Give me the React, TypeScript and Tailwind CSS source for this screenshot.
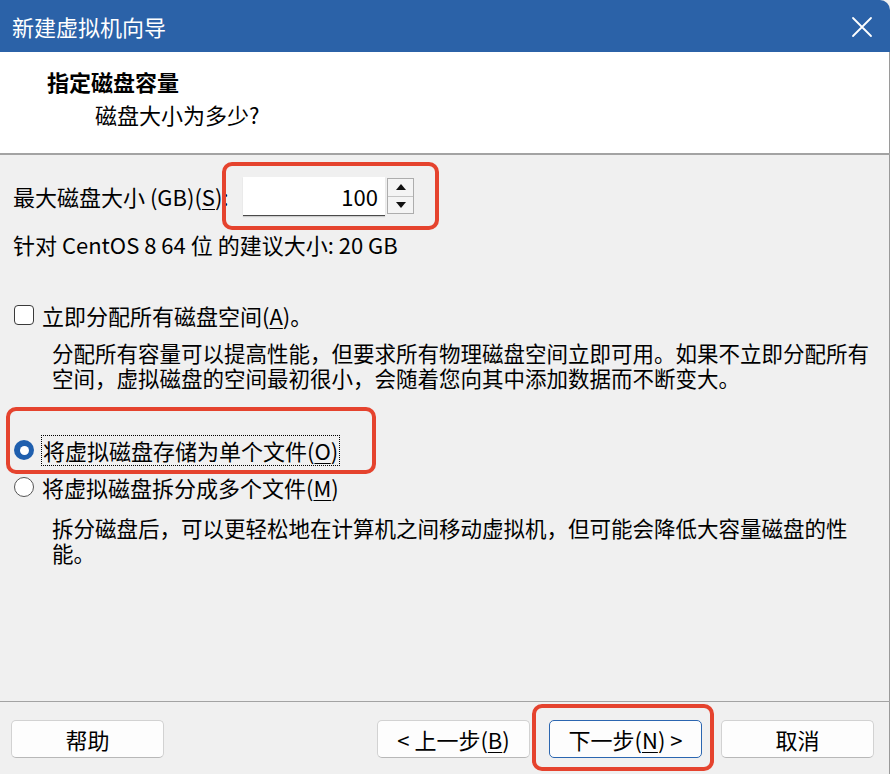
import React from "react";

function U({ children }: { children: React.ReactNode }) {
  return <span className="underline decoration-1 underline-offset-[3px]">{children}</span>;
}

function Btn({ children, primary }: { children: React.ReactNode; primary?: boolean }) {
  return (
    <div
      className={
        "h-[38px] w-[153px] flex items-center justify-center rounded-[5px] bg-[#fdfdfd] leading-none " +
        (primary
          ? "border-[1.5px] border-[#2b66b0]"
          : "border border-[#d2d2d2] border-b-[#b8b8b8]")
      }
    >
      {children}
    </div>
  );
}

export default function App() {
  return (
    <div className="relative w-[890px] h-[774px] flex flex-col bg-[#f0f0f0] overflow-hidden text-[22px] text-black font-['Noto_Sans_CJK_SC',sans-serif]">
      {/* title bar */}
      <div className="h-[52px] shrink-0 bg-[#2b62a8] flex items-center justify-between pl-[12px] pr-[17px] text-white rounded-tr-[10px]">
        <span className="leading-none">新建虚拟机向导</span>
        <svg width="22" height="22" viewBox="0 0 22 22" className="mt-[1px]">
          <path d="M2 2 L20 20 M20 2 L2 20" stroke="#ffffff" strokeWidth="1.8" strokeLinecap="round" />
        </svg>
      </div>

      {/* header */}
      <div className="h-[101px] shrink-0 bg-white pl-[47px] pt-[15px] border-r border-[#9a9a9a]">
        <div className="font-bold leading-[28px]">指定磁盘容量</div>
        <div className="pl-[48px] mt-[5px] leading-[28px]">磁盘大小为多少?</div>
      </div>
      <div className="h-[2px] shrink-0 bg-[#a3a3a3]" />

      {/* body */}
      <div className="flex-1 flex flex-col pl-[13px] pr-[4px] pt-[21px] border-r border-[#9a9a9a]">
        <div className="flex items-center h-[40px]">
          <div className="w-[230px] leading-none">
            最大磁盘大小 (GB)(<U>S</U>):
          </div>
          <div className="h-[39px] w-[142px] bg-white border-b-[1.5px] border-[#4a4a4a] shadow-[0_1px_1px_rgba(0,0,0,0.15)] flex items-center justify-end pr-[7px] leading-none">
            100
          </div>
          <div className="ml-[2px] h-[36px] w-[27px] border border-[#adadad] bg-[#f4f4f4] flex flex-col">
            <div className="flex-1 flex items-center justify-center border-b border-[#c4c4c4]">
              <svg width="10" height="6" viewBox="0 0 10 6"><path d="M0 6 L5 0 L10 6 Z" fill="#111" /></svg>
            </div>
            <div className="flex-1 flex items-center justify-center">
              <svg width="10" height="6" viewBox="0 0 10 6"><path d="M0 0 L5 6 L10 0 Z" fill="#111" /></svg>
            </div>
          </div>
        </div>

        <div className="mt-[15px] leading-[26px]">针对 CentOS 8 64 位 的建议大小: 20 GB</div>

        <div className="mt-[43px] flex items-center h-[30px]">
          <div className="w-[20px] h-[20px] ml-[1px] rounded-[4px] border-[1.5px] border-[#3a3a3a] bg-white" />
          <div className="ml-[8px] leading-none">
            立即分配所有磁盘空间(<U>A</U>)。
          </div>
        </div>

        <div className="mt-[10px] pl-[39px] text-[21.5px] leading-[25px] whitespace-nowrap">
          <div>分配所有容量可以提高性能，但要求所有物理磁盘空间立即可用。如果不立即分配所有</div>
          <div>空间，虚拟磁盘的空间最初很小，会随着您向其中添加数据而不断变大。</div>
        </div>

        <div className="mt-[44px] flex items-center h-[32px]">
          <div className="w-[20px] h-[20px] ml-[1px] rounded-full bg-[#1f5fae] flex items-center justify-center">
            <div className="w-[9px] h-[9px] rounded-full bg-white" />
          </div>
          <div className="ml-[7px] h-[31px] px-[1px] flex items-center border border-dotted border-black leading-none">
            将虚拟磁盘存储为单个文件(<U>O</U>)
          </div>
        </div>

        <div className="mt-[6px] flex items-center h-[30px]">
          <div className="w-[20px] h-[20px] ml-[1px] rounded-full border-[1.5px] border-[#555] bg-white" />
          <div className="ml-[8px] leading-none">
            将虚拟磁盘拆分成多个文件(<U>M</U>)
          </div>
        </div>

        <div className="mt-[13px] pl-[39px] text-[21.5px] leading-[25px] whitespace-nowrap">
          <div>拆分磁盘后，可以更轻松地在计算机之间移动虚拟机，但可能会降低大容量磁盘的性</div>
          <div>能。</div>
        </div>
      </div>

      <div className="h-[1.5px] shrink-0 bg-[#a3a3a3]" />

      {/* footer */}
      <div className="h-[72px] shrink-0 flex items-start pt-[18px] pl-[11px] pr-[15px] border-r border-[#9a9a9a]">
        <Btn>帮助</Btn>
        <div className="ml-auto flex gap-[19px]">
          <Btn>
            &lt; 上一步(<U>B</U>)
          </Btn>
          <Btn primary>
            下一步(<U>N</U>) &gt;
          </Btn>
          <Btn>取消</Btn>
        </div>
      </div>

      {/* annotation highlights */}
      <div className="absolute left-[222px] top-[162px] w-[217px] h-[68px] border-[4px] border-[#e5432e] rounded-[10px]" />
      <div className="absolute left-[6px] top-[407px] w-[370px] h-[67px] border-[4px] border-[#e5432e] rounded-[10px]" />
      <div className="absolute left-[532px] top-[704px] w-[182px] h-[67px] border-[4px] border-[#e5432e] rounded-[10px]" />
    </div>
  );
}
